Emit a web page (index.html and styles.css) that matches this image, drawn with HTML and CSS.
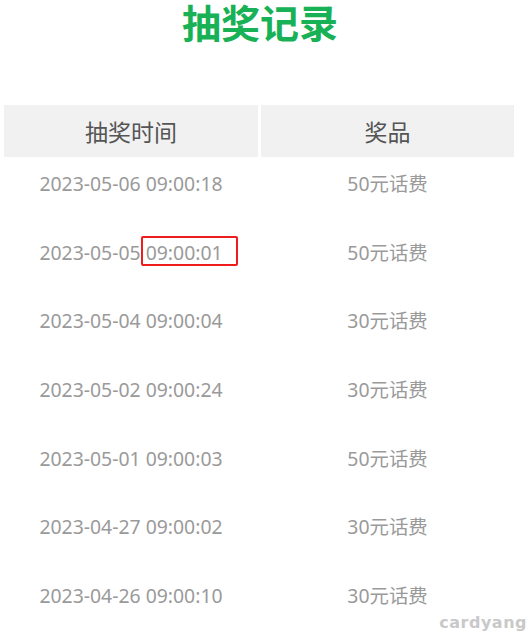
FILE: index.html
```html
<!DOCTYPE html>
<html lang="zh-CN">
<head>
<meta charset="utf-8">
<title>抽奖记录</title>
<link rel="stylesheet" href="styles.css">
</head>
<body>
<div class="page">
  <h1 class="title">抽奖记录</h1>
  <div class="table">
    <div class="head">
      <div class="hcell">抽奖时间</div>
      <div class="hcell">奖品</div>
    </div>
    <div class="row"><div class="cell">2023-05-06 09:00:18</div><div class="cell">50元话费</div></div>
    <div class="row"><div class="cell">2023-05-05 <span class="mark">09:00:01</span></div><div class="cell">50元话费</div></div>
    <div class="row"><div class="cell">2023-05-04 09:00:04</div><div class="cell">30元话费</div></div>
    <div class="row"><div class="cell">2023-05-02 09:00:24</div><div class="cell">30元话费</div></div>
    <div class="row"><div class="cell">2023-05-01 09:00:03</div><div class="cell">50元话费</div></div>
    <div class="row"><div class="cell">2023-04-27 09:00:02</div><div class="cell">30元话费</div></div>
    <div class="row"><div class="cell">2023-04-26 09:00:10</div><div class="cell">30元话费</div></div>
  </div>
  <div class="watermark">cardyang</div>
</div>
</body>
</html>
```

FILE: styles.css
```css
html, body {
  margin: 0;
  padding: 0;
  height: 100%;
  overflow: hidden;
  background: #ffffff;
}

.page {
  position: relative;
  width: 532px;
  height: 637px;
  font-family: "Noto Sans", "Noto Sans CJK SC", sans-serif;
}

.title {
  margin: 0;
  text-align: center;
  font-family: "DejaVu Sans", "Noto Sans CJK SC", sans-serif;
  font-size: 39px;
  font-weight: 700;
  line-height: 50px;
  color: #18b156;
  padding-right: 12px;
}

.table {
  margin: 55px 18px 0 4px;
}

.head {
  display: grid;
  grid-template-columns: 254px 253px;
  column-gap: 3px;
}

.hcell {
  background: #f1f1f1;
  height: 52px;
  line-height: 52px;
  text-align: center;
  font-family: "Noto Sans CJK SC", sans-serif;
  font-size: 23px;
  color: #555555;
}

.row {
  display: grid;
  grid-template-columns: 254px 253px;
  column-gap: 3px;
  height: 68.67px;
  box-sizing: border-box;
  padding-top: 14px;
}

.cell {
  text-align: center;
  font-size: 19.4px;
  line-height: 26px;
  color: #9a9a9a;
}

.mark {
  position: relative;
  display: inline-block;
  line-height: 26px;
}

.mark::after {
  content: "";
  position: absolute;
  top: -4px;
  bottom: 0;
  left: -5px;
  right: -15px;
  border: 2px solid #ee1c1c;
  border-radius: 2px;
  box-sizing: border-box;
}

.watermark {
  position: absolute;
  right: 5px;
  bottom: 4px;
  font-family: "DejaVu Sans", sans-serif;
  font-weight: 700;
  font-size: 16px;
  letter-spacing: 0.5px;
  line-height: 20px;
  color: #c9c9c9;
}
```
